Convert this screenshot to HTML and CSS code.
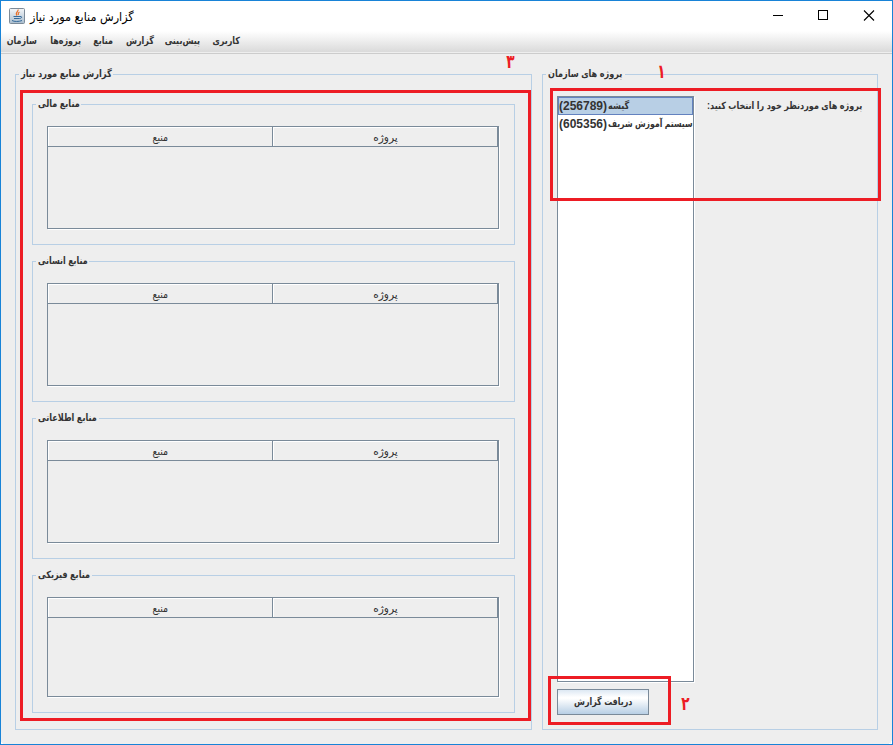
FILE: index.html
```html
<!DOCTYPE html>
<html lang="fa">
<head>
<meta charset="utf-8">
<title>گزارش منابع مورد نیاز</title>
<link rel="stylesheet" href="styles.css">
</head>
<body>
<div class="window">
  <header class="titlebar">
    <svg class="java" width="16" height="16" viewBox="0 0 16 16">
      <defs><linearGradient id="g" x2="0" y2="1"><stop offset="0" stop-color="#f4f6f8"/><stop offset="1" stop-color="#a9bdce"/></linearGradient></defs>
      <rect x=".5" y=".5" width="15" height="15" rx="1" fill="url(#g)" stroke="#7d8b98"/>
      <path d="M9 1.500c1 2-3.500 3-1 6M10.500 4c-2 1-1.500 1.500-1 3" fill="none" stroke="#e8702a" stroke-width="1.200"/>
      <path d="M4.500 8.500h6.500M5 10.500h5.500M11 8.500c2.500-.5 2 2-.5 2M3 12.500c2 1.300 7 1.300 10 0" fill="none" stroke="#34699a"/>
    </svg>
    <h1 class="caption"><span class="fit" dir="rtl">گزارش منابع مورد نیاز</span></h1>
    <svg class="controls" width="103" height="12" viewBox="0 0 103 12">
      <path d="M1 5.500h10M46.500 .5h9v9h-9z" fill="none" stroke="#000" shape-rendering="crispEdges"/>
      <path d="M92 .5l10 10M102 .5l-10 10" fill="none" stroke="#000" stroke-width="1.100"/>
    </svg>
  </header>
  <nav class="menubar">
    <span class="item m1" dir="rtl">سازمان</span>
    <span class="item m2" dir="rtl">پروژه‌ها</span>
    <span class="item m3" dir="rtl">منابع</span>
    <span class="item m4" dir="rtl">گزارش</span>
    <span class="item m5" dir="rtl">پیش‌بینی</span>
    <span class="item m6" dir="rtl">کاربری</span>
  </nav>
  <main class="content">
    <section class="panel report">
      <h2 class="legend l-report"><span class="fit" dir="rtl">گزارش منابع مورد نیاز</span></h2>
      <div class="panel group">
        <h3 class="legend l-fin"><span class="fit" dir="rtl">منابع مالی</span></h3>
        <div class="table"><div class="head"><div class="cell"><span class="fit">منبع</span></div><div class="cell"><span class="fit wide">پروژه</span></div></div></div>
      </div>
      <div class="panel group">
        <h3 class="legend l-hum"><span class="fit" dir="rtl">منابع انسانی</span></h3>
        <div class="table"><div class="head"><div class="cell"><span class="fit">منبع</span></div><div class="cell"><span class="fit wide">پروژه</span></div></div></div>
      </div>
      <div class="panel group">
        <h3 class="legend l-inf"><span class="fit" dir="rtl">منابع اطلاعاتی</span></h3>
        <div class="table"><div class="head"><div class="cell"><span class="fit">منبع</span></div><div class="cell"><span class="fit wide">پروژه</span></div></div></div>
      </div>
      <div class="panel group last">
        <h3 class="legend l-phy"><span class="fit" dir="rtl">منابع فیزیکی</span></h3>
        <div class="table"><div class="head"><div class="cell"><span class="fit">منبع</span></div><div class="cell"><span class="fit wide">پروژه</span></div></div></div>
      </div>
    </section>
    <section class="panel projects">
      <h2 class="legend l-proj"><span class="fit" dir="rtl">پروژه های سازمان</span></h2>
      <div class="chooser">
        <div class="list">
          <div class="row selected"><b>(256789)</b><span class="fit r1" dir="rtl">گیشه</span></div>
          <div class="row"><b>(605356)</b><span class="fit r2" dir="rtl">سیستم آموزش شریف</span></div>
        </div>
        <p class="prompt"><span class="fit" dir="rtl">پروژه های موردنظر خود را انتخاب کنید:</span></p>
      </div>
      <button class="button"><span class="fit" dir="rtl">دریافت گزارش</span></button>
    </section>
  </main>
  <div class="mark box-report"></div>
  <div class="mark box-list"></div>
  <div class="mark box-button"></div>
  <span class="num n1">۱</span>
  <span class="num n2">۲</span>
  <span class="num n3">۳</span>
  <i class="corner tl"></i><i class="corner tr"></i><i class="corner bl"></i><i class="corner br"></i>
</div>
</body>
</html>
```
FILE: styles.css
```css
* { box-sizing: border-box; }
body {
  margin: 0;
  background: #fff;
  color: #333;
  font: bold 10px/14px "Liberation Sans", "DejaVu Sans Condensed", "DejaVu Sans", sans-serif;
}
h1, h2, h3, p { margin: 0; font: inherit; }
.window {
  position: relative;
  width: 893px;
  height: 745px;
  border: 1px solid #1883d7;
  background: #eee;
  overflow: hidden;
  white-space: nowrap;
}
.fit { display: inline-block; transform: scaleX(.9); transform-origin: 0 50%; }
.titlebar { height: 30px; background: #fff; display: flex; align-items: center; padding: 0 17px 0 8px; }
.caption { margin-left: 5px; padding-top: 1px; font-weight: normal; font-size: 12px; color: #000; flex: 1; }
.caption .fit { transform: scaleX(1.04); }
.menubar {
  height: 23px;
  padding: 3px 0 0 6px;
  display: flex;
  background: linear-gradient(#fff, #dadada 21px, #eee 21px, #eee 22px, #ccc 22px);
}
.item { height: 14px; margin-right: 12px; transform: scaleX(.89); transform-origin: 100% 50%; }
.m1 { width: 30px; }
.m2 { width: 32px; }
.m3 { width: 20px; }
.m4 { width: 29px; }
.m5 { width: 34px; }
.m6 { width: 28px; }
.content { display: flex; gap: 10px; padding: 20px 14px 14px; height: 690px; }
.panel { border: 1px solid #b8cfe5; }
.legend {
  height: 14px;
  margin: -8px 0 0 3px;
  padding-left: 2px;
  background: #eee;
}
.report { width: 517px; height: 656px; padding: 0 16px; }
.projects { width: 336px; height: 656px; padding: 0 14px; }
.l-report { width: 94px; margin-left: -13px; }
.l-report .fit { transform: scaleX(.92); }
.l-proj { width: 79px; margin-left: -11px; }
.l-fin { width: 45px; }
.l-hum { width: 53px; }
.l-hum .fit { transform: scaleX(.88); }
.l-inf { width: 63px; }
.l-phy { width: 56px; }
.group { width: 483px; height: 141px; margin-bottom: 16px; }
.l-report + .group { margin-top: 23px; }
.last { height: 138px; margin-bottom: 0; }
.table {
  width: 452px;
  height: 103px;
  margin: 15px 0 0 14px;
  border: 1px solid #7a8a99;
  box-shadow: 1px 1px 0 #fff;
}
.last .table { height: 100px; }
.head { display: flex; height: 20px; }
.cell {
  width: 225px;
  border: solid #7a8a99;
  border-width: 0 1px 1px 0;
  box-shadow: inset 1px 1px 0 #fff;
  text-align: center;
  font-weight: normal;
  font-size: 11px;
  padding-top: 3px;
}
.cell .fit { transform: scaleX(.95); transform-origin: 50% 50%; }
.cell .wide { transform: scaleX(1.07); }
.chooser { display: flex; margin-top: 15px; }
.list { flex: none; width: 137px; height: 586px; border: 1px solid #7a8a99; background: #fff; box-shadow: 1px 1px 0 #fff; }
.row { height: 18px; padding: 2px 0 0 1px; display: flex; }
.row b { flex: none; font-size: 12px; width: 49px; }
.row .fit { flex: none; }
.row .r2 { transform: scaleX(.86); }
.selected { background: #b8cfe5; box-shadow: inset 0 0 0 1px #6382bf; }
.prompt { margin: 3px 0 0 13px; }
.prompt .fit { transform: scaleX(.895); }
.button {
  display: block;
  width: 92px;
  height: 26px;
  margin-top: 7px;
  padding: 0;
  border: 1px solid #7a8a99;
  font: inherit;
  color: #333;
  background: linear-gradient(#dde8f3, #fff 30%, #fff 35%, #b8cfe5);
}
.button .fit { transform: scaleX(.88); transform-origin: 50% 50%; }
.mark { position: absolute; border: 3px solid #ed1c24; }
.box-report { left: 19px; top: 89px; width: 511px; height: 631px; }
.box-list { left: 549px; top: 87px; width: 331px; height: 113px; }
.box-button { left: 547px; top: 675px; width: 123px; height: 49px; }
.num { position: absolute; color: #ed1c24; font-size: 16px; line-height: 16px; transform: scale(.95, 1.2); }
.n1 { left: 656px; top: 63px; }
.n2 { left: 680px; top: 695px; }
.n3 { left: 505px; top: 53px; }
.corner { position: absolute; width: 5px; height: 5px; background: #fff; }
.tl { left: -1px; top: -1px; }
.tr { right: -1px; top: -1px; }
.bl { left: -1px; bottom: -1px; background: linear-gradient(45deg, #fff 50%, #eee 50%); }
.br { right: -1px; bottom: -1px; background: linear-gradient(-45deg, #fff 50%, #eee 50%); }
```
